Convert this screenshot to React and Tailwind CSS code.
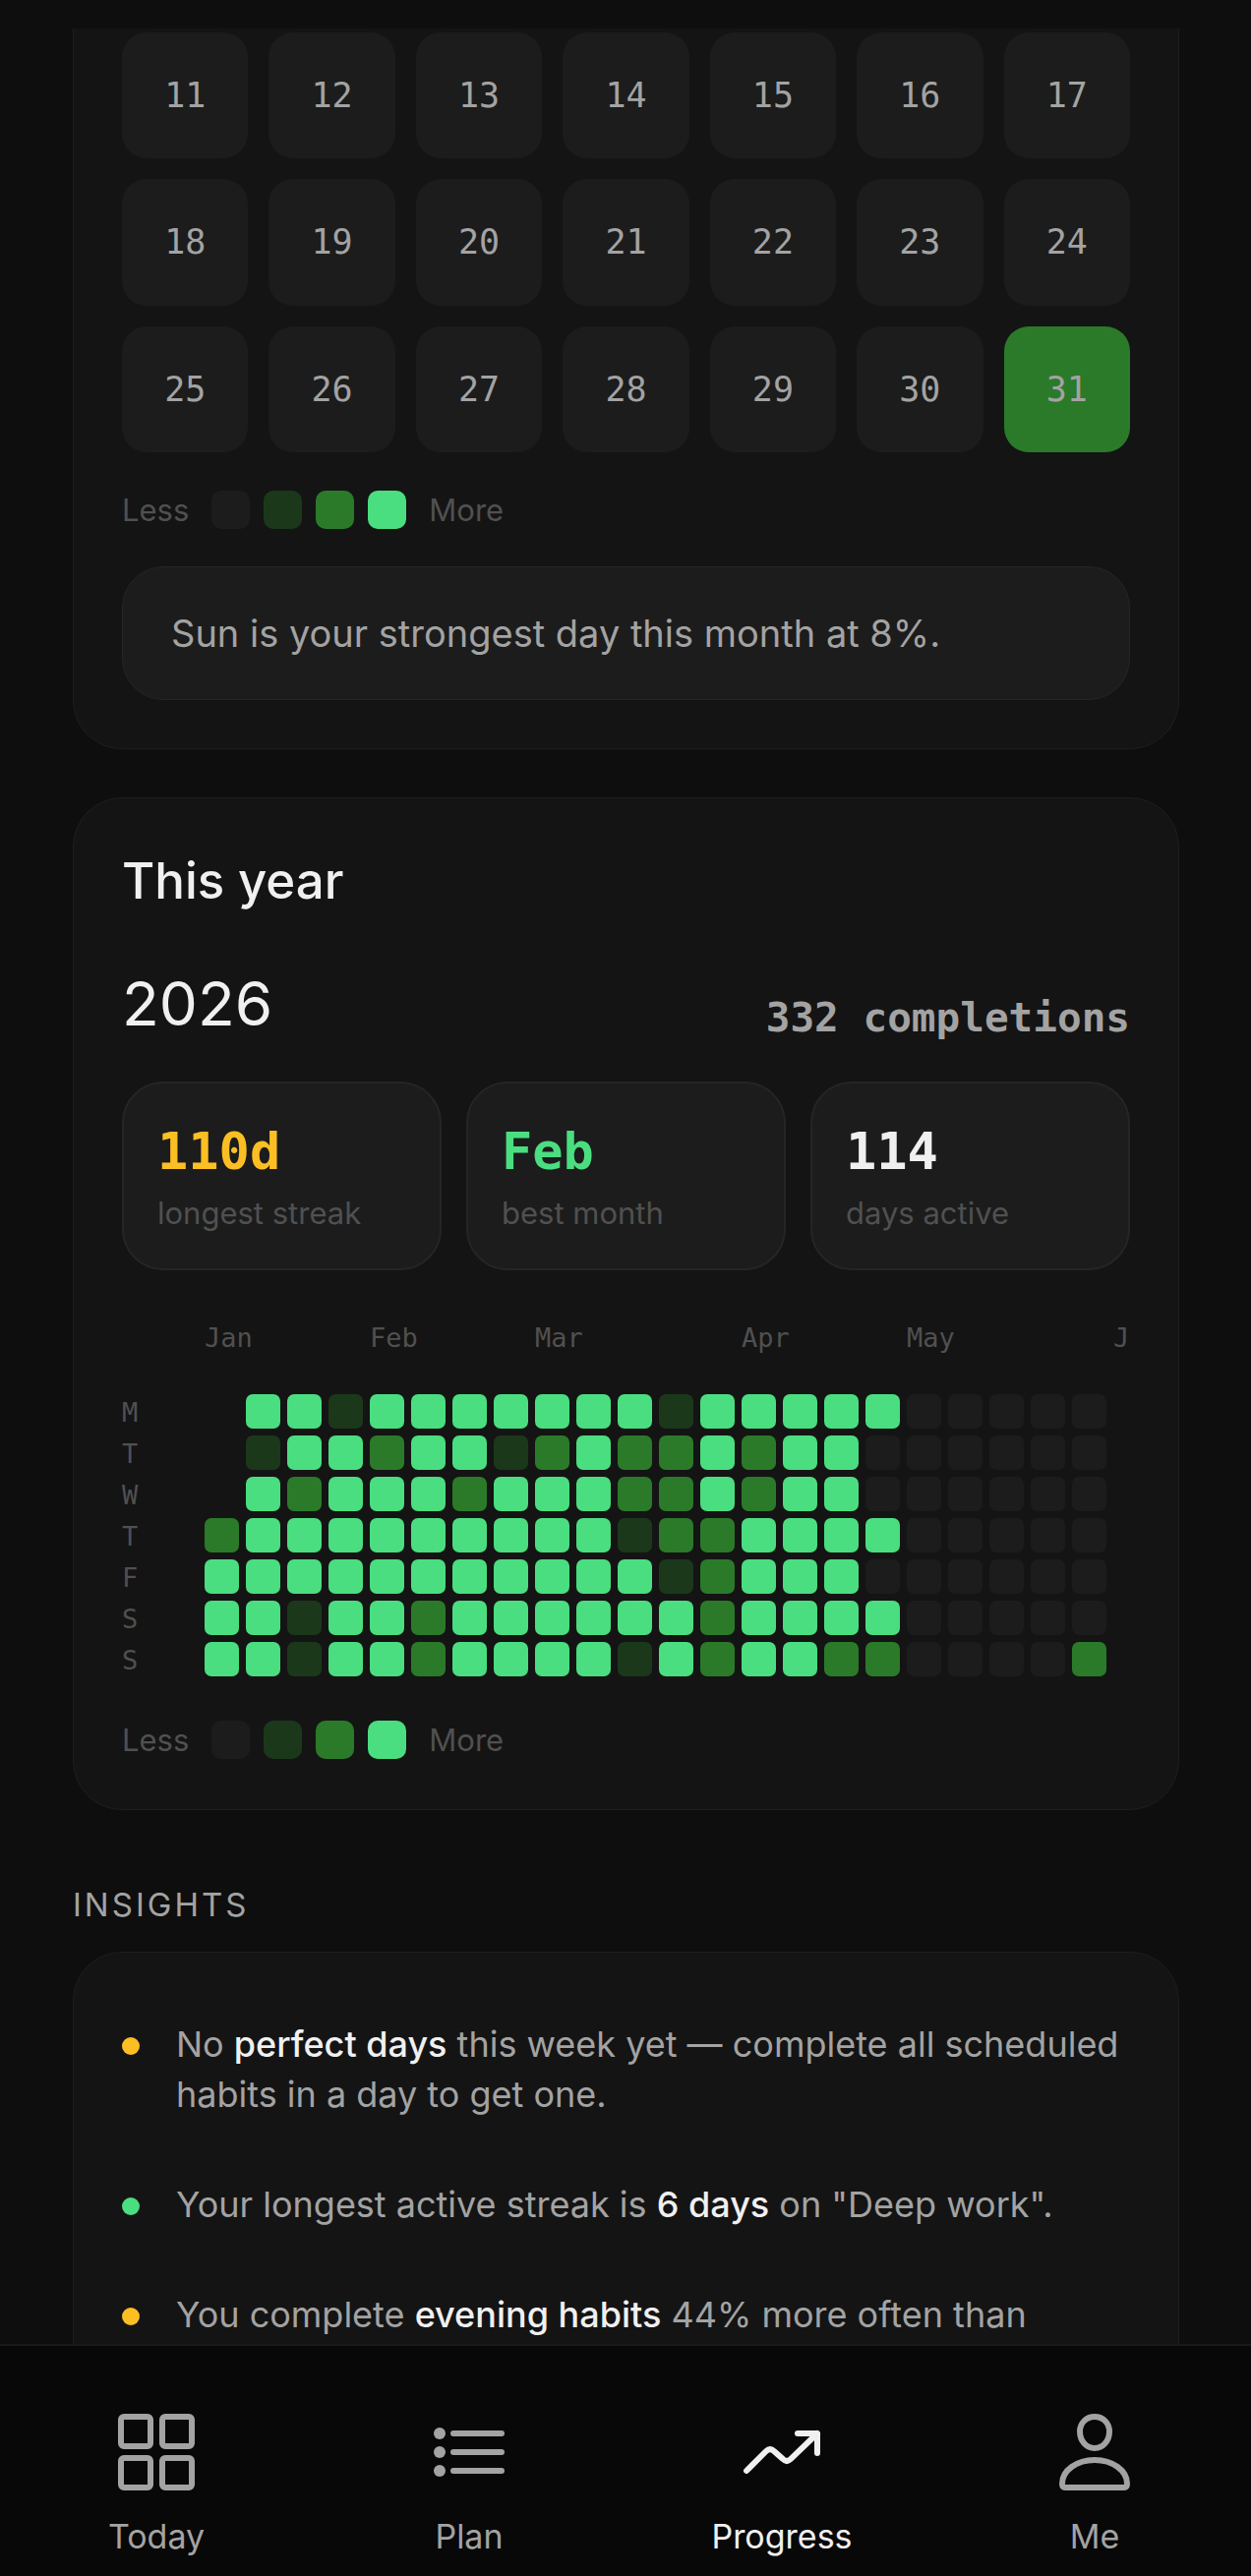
const LEVELS = {
  0: 'bg-[#1c1c1c]',
  1: 'bg-[#1b381b]',
  2: 'bg-[#2b7a29]',
  3: 'bg-[#4ade80]',
}

const DAYS = [11, 12, 13, 14, 15, 16, 17, 18, 19, 20, 21, 22, 23, 24, 25, 26, 27, 28, 29, 30, 31]

const MONTHS = [
  { name: 'Jan', weeks: 4 },
  { name: 'Feb', weeks: 4 },
  { name: 'Mar', weeks: 5 },
  { name: 'Apr', weeks: 4 },
  { name: 'May', weeks: 5 },
  { name: 'J', weeks: 0 },
]

// one string per weekday, one digit per week, "-" is before Jan 1
const YEAR = [
  { day: 'M', weeks: '-331333333313333300000' },
  { day: 'T', weeks: '-133233123223233000000' },
  { day: 'W', weeks: '-323332333223233000000' },
  { day: 'T', weeks: '2333333333122333300000' },
  { day: 'F', weeks: '3333333333312333000000' },
  { day: 'S', weeks: '3313323333332333300000' },
  { day: 'S', weeks: '3313323333132332200002' },
]

const STATS = [
  { value: '110d', label: 'longest streak', color: 'text-[#fbbf24]' },
  { value: 'Feb', label: 'best month', color: 'text-[#4ade80]' },
  { value: '114', label: 'days active', color: 'text-[#f0f0f0]' },
]

function Legend() {
  return (
    <div className="flex items-center gap-[23px] text-[31px] leading-[39px] text-[#505050]">
      <span>Less</span>
      <div className="flex gap-[14px]">
        {[0, 1, 2, 3].map((level) => (
          <span key={level} className={`size-[39px] rounded-[10px] ${LEVELS[level]}`} />
        ))}
      </div>
      <span>More</span>
    </div>
  )
}

function MonthCard() {
  return (
    <section className="rounded-b-[50px] border border-t-0 border-[#1e1e1e] bg-[#141414] px-[49px] pt-1 pb-[49px]">
      <div className="grid grid-cols-7 gap-[21px]">
        {DAYS.map((day) => (
          <button
            key={day}
            type="button"
            className={`aspect-square rounded-[25px] font-['DejaVu_Sans_Mono',monospace] text-[35px] text-[#a3a3a3] ${day === 31 ? LEVELS[2] : LEVELS[0]}`}
          >
            {day}
          </button>
        ))}
      </div>
      <div className="mt-[39px]">
        <Legend />
      </div>
      <p className="mt-[38px] rounded-[42px] border border-[#252525] bg-[#1c1c1c] px-[49px] py-[41px] text-[38px] leading-[52px] text-[#a3a3a3]">
        Sun is your strongest day this month at 8%.
      </p>
    </section>
  )
}

function YearCard() {
  return (
    <section className="mt-[49px] rounded-[50px] border border-[#1e1e1e] bg-[#141414] px-[49px] pt-[49px] pb-[51px]">
      <h2 className="text-[51px] leading-[70px] font-medium text-[#f0f0f0]">This year</h2>
      <div className="mt-12 flex items-end justify-between">
        <span className="text-[62px] leading-[84px] text-[#f0f0f0]">2026</span>
        <span className="font-['DejaVu_Sans_Mono',monospace] text-[41px] leading-[56px] font-bold text-[#a3a3a3]">
          332 completions
        </span>
      </div>

      <div className="mt-[37px] grid grid-cols-3 gap-[25px]">
        {STATS.map((s) => (
          <div key={s.label} className="rounded-[42px] border-2 border-[#252525] bg-[#1c1c1c] px-[34px] pt-[32px] pb-[34px]">
            <p className={`font-['DejaVu_Sans_Mono',monospace] text-[52px] leading-[74px] font-bold ${s.color}`}>
              {s.value}
            </p>
            <p className="mt-1 text-[31px] leading-[44px] text-[#505050]">{s.label}</p>
          </div>
        ))}
      </div>

      {/* Heatmap */}
      <div className="mt-[49px] font-['DejaVu_Sans_Mono',monospace] text-[27px] text-[#505050]">
        <div className="flex pl-[84px] leading-[40px]">
          {MONTHS.map((m) => (
            <div key={m.name} className="flex shrink-0">
              <span className="w-0">{m.name}</span>
              {[...Array(m.weeks)].map((_, i) => (
                <span key={i} className="w-[42px]" />
              ))}
            </div>
          ))}
        </div>
        <div className="mt-[37px] flex flex-col gap-[7px]">
          {YEAR.map((row, i) => (
            <div key={i} className="flex h-[35px] gap-[7px] leading-[38px]">
              <span className="w-[77px]">{row.day}</span>
              {[...row.weeks].map((level, w) => (
                <span key={w} className={`size-[35px] rounded-[7px] ${LEVELS[level] ?? ''}`} />
              ))}
            </div>
          ))}
        </div>
      </div>
      <div className="mt-[45px]">
        <Legend />
      </div>
    </section>
  )
}

function Insight({ color, children }) {
  return (
    <li className="flex gap-[37px]">
      <span className={`mt-[18px] size-[18px] shrink-0 rounded-full ${color}`} />
      <p>{children}</p>
    </li>
  )
}

function Insights() {
  return (
    <section className="mt-[71px]">
      <h2 className="text-[33px] leading-[50px] tracking-[3px] text-[#a3a3a3]">INSIGHTS</h2>
      <ul className="mt-[23px] flex flex-col gap-[61px] rounded-[50px] border border-[#1e1e1e] bg-[#141414] px-[49px] pt-[68px] pb-[120px] text-[36px] leading-[51px] text-[#a3a3a3]">
        <Insight color="bg-[#fbbf24]">
          No <b className="font-medium text-[#f0f0f0]">perfect days</b> this week yet — complete all scheduled habits in
          a day to get one.
        </Insight>
        <Insight color="bg-[#4ade80]">
          Your longest active streak is <b className="font-medium text-[#f0f0f0]">6 days</b> on "Deep work".
        </Insight>
        <Insight color="bg-[#fbbf24]">
          You complete <b className="font-medium text-[#f0f0f0]">evening habits</b> 44% more often than
        </Insight>
      </ul>
    </section>
  )
}

function NavItem({ label, active, children }) {
  return (
    <a
      href="#"
      aria-current={active ? 'page' : undefined}
      className={`flex flex-col items-center text-[34px] leading-[48px] ${active ? 'text-[#f0f0f0]' : 'text-[#a3a3a3]'}`}
    >
      <svg
        className="size-20"
        viewBox="0 0 80 80"
        fill="none"
        stroke="currentColor"
        strokeWidth="6"
        strokeLinecap="round"
        strokeLinejoin="round"
        aria-hidden="true"
      >
        {children}
      </svg>
      <span className="mt-[22px]">{label}</span>
    </a>
  )
}

export default function App() {
  return (
    <div className="flex h-screen flex-col bg-[#0e0e0e] pt-[29px] font-[Inter,sans-serif]">
      <main className="min-h-0 flex-1 overflow-hidden pr-[73px] pl-[74px]">
        <MonthCard />
        <YearCard />
        <Insights />
      </main>
      <nav className="grid grid-cols-4 border-t-2 border-[#1a1a1a] bg-[#080808] pt-[68px] pb-4">
        <NavItem label="Today">
          <rect x="4" y="4" width="30" height="30" rx="3" />
          <rect x="46" y="4" width="30" height="30" rx="3" />
          <rect x="4" y="46" width="30" height="30" rx="3" />
          <rect x="46" y="46" width="30" height="30" rx="3" />
        </NavItem>
        <NavItem label="Plan">
          <path d="M24 21H73M24 40H73M24 59H73" />
          <g fill="currentColor" stroke="none">
            <circle cx="10" cy="21" r="6" />
            <circle cx="10" cy="40" r="6" />
            <circle cx="10" cy="59" r="6" />
          </g>
        </NavItem>
        <NavItem label="Progress" active>
          <path d="M4 59L24 39Q28 35 32 39L41 47Q45 51 49 47L76 21M56 21H76V41" />
        </NavItem>
        <NavItem label="Me">
          <path d="M40 4C49 4 55 11 55 19C55 29 48 36 40 36S25 29 25 19C25 11 31 4 40 4Z" />
          <path d="M7 72A33 24 0 0 1 73 72Q73 76 70 76H10Q7 76 7 72Z" />
        </NavItem>
      </nav>
    </div>
  )
}
